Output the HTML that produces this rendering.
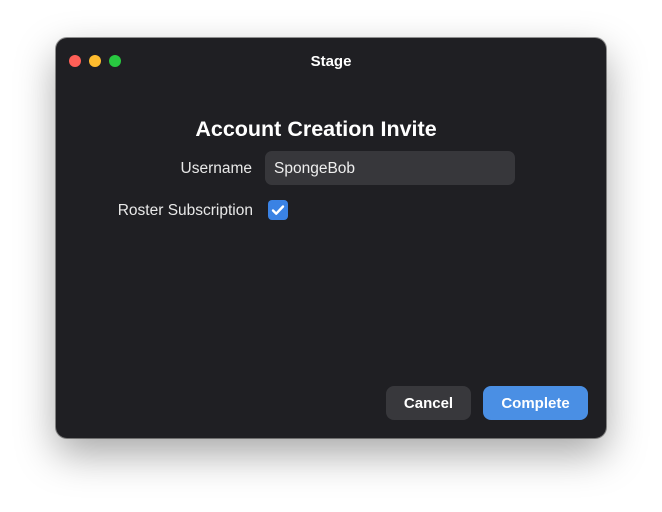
<!DOCTYPE html>
<html><head><style>
body{margin:0;width:662px;height:512px;background:#fff;font-family:"Liberation Sans",sans-serif;position:relative;overflow:hidden}
.win{position:absolute;left:56px;top:38px;width:550px;height:400px;background:#1f1f23;border-radius:11px;box-shadow:0 16px 40px rgba(0,0,0,.35),0 0 0 1px rgba(0,0,0,.4)}
.dot{position:absolute;top:17px;width:12px;height:12px;border-radius:50%}
.t{position:absolute;color:#fff;white-space:nowrap}
.btn{position:absolute;top:348px;height:34px;border-radius:8px;color:#fff;font-weight:bold;font-size:15px;text-align:center;line-height:35px}
</style></head><body>
<div class="win">
<div class="dot" style="left:13px;background:#fe5f57"></div>
<div class="dot" style="left:33px;background:#febc2e"></div>
<div class="dot" style="left:53px;background:#28c840"></div>
<div class="t" style="left:0;width:550px;text-align:center;top:15px;font-size:15px;font-weight:bold">Stage</div>
<div class="t" style="left:0;width:520px;text-align:center;top:79px;font-size:21.5px;font-weight:bold">Account Creation Invite</div>
<div class="t" style="right:354px;top:122px;font-size:15.5px;color:#e8e8e8">Username</div>
<div style="position:absolute;left:209px;top:113px;width:250px;height:34px;background:#37373b;border-radius:7px"></div>
<div class="t" style="left:218px;top:122px;font-size:15.5px;color:#eee">SpongeBob</div>
<div class="t" style="right:353px;top:164px;font-size:15.5px;color:#e8e8e8">Roster Subscription</div>
<div style="position:absolute;left:212px;top:162px;width:20px;height:20px;background:#3a82e4;border-radius:4px">
<svg width="20" height="20" viewBox="0 0 20 20"><path d="M5 10.5l3.2 3.2L15 6.5" fill="none" stroke="#fff" stroke-width="2.4" stroke-linecap="round" stroke-linejoin="round"/></svg></div>
<div class="btn" style="left:330px;width:85px;background:#38383c">Cancel</div>
<div class="btn" style="left:427px;width:105px;background:#4a8fe4">Complete</div>
</div>
</body></html>
